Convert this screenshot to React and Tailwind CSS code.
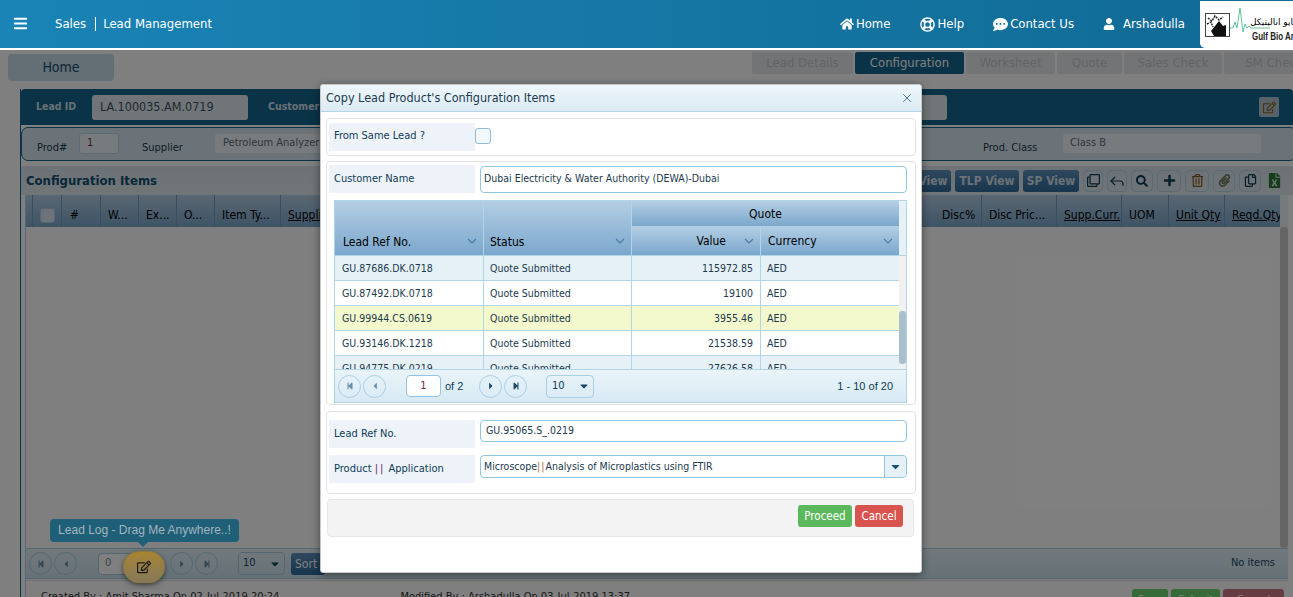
import React from "react";
import { FaHome, FaRegLifeRing, FaCommentDots, FaUser, FaBars, FaRegEdit, FaSearch, FaPlus, FaRegTrashAlt, FaPaperclip, FaRegCopy, FaFileExcel, FaStepBackward, FaStepForward, FaCaretLeft, FaCaretRight, FaCaretDown, FaRegClone } from "react-icons/fa";
import { Reply, X } from "lucide-react";

const font = { fontFamily: '"DejaVu Sans Condensed", "DejaVu Sans", Tahoma, sans-serif' };
const arial = { fontFamily: '"Liberation Sans", sans-serif' };

function Caret() {
  return (
    <svg width="10" height="6" viewBox="0 0 10 6" className="shrink-0 text-[#4d7a9c]">
      <path d="M1 1l4 4 4-4" fill="none" stroke="currentColor" strokeWidth="1.1" />
    </svg>
  );
}

function NavItem({ icon, label }) {
  return (
    <div className="flex items-center gap-[2px] text-white text-[13px]">
      {icon}
      <span>{label}</span>
    </div>
  );
}

function PageBtn({ children, dark }) {
  return (
    <div className={`w-[23px] h-[23px] rounded-full border flex items-center justify-center text-[10px] ${dark ? "border-[#a9cfe3] text-[#1b4a68]" : "border-[#a9cfe3] text-[#6d90a8]"}`}>
      {children}
    </div>
  );
}

function Tab({ label, active, w }) {
  return (
    <div className={`h-[22px] rounded-[2px] flex items-center justify-center text-[13px] ${w} ${active ? "bg-[#14668e] text-white" : "bg-[#e6e9ec] text-[#c5cacd]"}`}>
      {label}
    </div>
  );
}

function ToolBtn({ children, w = "w-[20px]" }) {
  return (
    <div className={`h-[22px] ${w} rounded-[5px] border border-[#b5d6e8] flex items-center justify-center text-[#0f3d57] text-[13px]`}>
      {children}
    </div>
  );
}

function ViewBtn({ children, w }) {
  return (
    <div className={`h-[22px] ${w} rounded-[3px] bg-gradient-to-b from-[#5d90bc] to-[#2f6b9c] text-[#d5e3ee] font-bold text-[12px] flex items-center justify-center`}>
      {children}
    </div>
  );
}

function HeadCell({ w, children, underline, pl = "pl-[7px]" }) {
  return (
    <div className={`${w} shrink-0 h-full border-r border-[#6d9cc0] flex items-center pt-[8px] overflow-hidden whitespace-nowrap text-[12px] text-black ${pl} ${underline ? "underline" : ""}`}>
      {children}
    </div>
  );
}

const rows = [
  ["GU.87686.DK.0718", "115972.85", "bg-[#e6f1f7]"],
  ["GU.87492.DK.0718", "19100", "bg-white"],
  ["GU.99944.CS.0619", "3955.46", "bg-[#f4f9cd]"],
  ["GU.93146.DK.1218", "21538.59", "bg-white"],
  ["GU.94775.DK.0219", "27626.58", "bg-[#e6f1f7]"],
];

const headBg = "bg-gradient-to-b from-[#b4cfe4] to-[#7ba7cc]";

function Modal() {
  return (
    <div className="absolute left-[320px] top-[84px] z-30 w-[602px] h-[489px] bg-white rounded-[3px] border border-[#c8c8c8] shadow-[0_2px_8px_rgba(0,0,0,0.45)] flex flex-col text-[11px] text-[#0f3d57]">
      <div className="h-[27px] shrink-0 bg-gradient-to-b from-[#eef6fb] to-[#dcebf5] border-b border-[#b4d4e8] rounded-t-[3px] flex items-center justify-between pl-[5px] pr-[7px]">
        <span className="text-[12.5px] text-[#1c3a4e]">Copy Lead Product's Configuration Items</span>
        <X size={14} strokeWidth={1.6} className="text-[#3f7392]" />
      </div>

      <div className="mt-[6px] mx-[5px] h-[38px] border border-[#e2e2e2] rounded-[4px] flex items-center pl-[2px] shrink-0">
        <div className="w-[146px] h-[28px] bg-[#eef2f9] flex items-center pl-[5px] pb-[2px]">From Same Lead ?</div>
        <div className="w-[16px] h-[16px] rounded-[3px] border border-[#8dbcd9] bg-[#f2f8fc] -mt-[3px]" />
      </div>

      <div className="mt-[5px] mx-[5px] h-[244px] border border-[#e2e2e2] rounded-[4px] pl-[2px] pt-[3px] shrink-0">
        <div className="flex items-center">
          <div className="w-[146px] h-[28px] bg-[#eef2f9] flex items-center pl-[5px]">Customer Name</div>
          <div className="ml-[5px] w-[427px] h-[27px] border border-[#93c5e0] rounded-[4px] flex items-center pl-[3px] text-[#1c3a4e] text-[10.5px]">Dubai Electricity &amp; Water Authority (DEWA)-Dubai</div>
        </div>
        <div className="mt-[7px] ml-[5px] w-[573px] h-[203px] border border-[#b0d5e8] flex flex-col overflow-hidden">
          <div className="h-[55px] shrink-0 flex border-b border-[#b0d5e8]">
            <div className={`w-[149px] shrink-0 ${headBg} border-r border-[#b0d5e8] flex items-end justify-between pl-[8px] pr-[6px] pb-[4px] text-[12px] text-black`}>
              <span>Lead Ref No.</span><span className="pb-[7px]"><Caret /></span>
            </div>
            <div className={`w-[148px] shrink-0 ${headBg} border-r border-[#b0d5e8] flex items-end justify-between pl-[6px] pr-[6px] pb-[4px] text-[12px] text-black`}>
              <span>Status</span><span className="pb-[7px]"><Caret /></span>
            </div>
            <div className="w-[267px] shrink-0 flex flex-col">
              <div className={`h-[25px] ${headBg} flex items-center justify-center text-[12px] text-black`}>Quote</div>
              <div className="flex-1 flex">
                <div className={`w-[129px] ${headBg} border-r border-[#b0d5e8] flex items-center justify-end gap-[18px] pr-[6px] text-[12px] text-black`}>
                  <span>Value</span><Caret />
                </div>
                <div className={`flex-1 ${headBg} flex items-center justify-between pl-[7px] pr-[6px] text-[12px] text-black`}>
                  <span>Currency</span><Caret />
                </div>
              </div>
            </div>
            <div className="flex-1 bg-[#e6f1f7]" />
          </div>
          <div className="h-[114px] shrink-0 flex overflow-hidden border-b border-[#b0d5e8]">
            <div className="w-[564px] shrink-0">
              {rows.map((r) => (
                <div key={r[0]} className={`h-[25px] flex items-center border-b border-[#b0d5e8] text-[#1c3a4e] text-[10.5px] ${r[2]}`}>
                  <div className="w-[149px] shrink-0 h-full border-r border-[#b0d5e8] flex items-center pl-[7px] pt-[1px]">{r[0]}</div>
                  <div className="w-[148px] shrink-0 h-full border-r border-[#b0d5e8] flex items-center pl-[6px] pt-[1px]">Quote Submitted</div>
                  <div className="w-[129px] shrink-0 h-full border-r border-[#b0d5e8] flex items-center justify-end pr-[7px] pt-[1px]">{r[1]}</div>
                  <div className="flex-1 h-full flex items-center pl-[6px] pt-[1px]">AED</div>
                </div>
              ))}
            </div>
            <div className="flex-1 bg-[#f1f1f1] relative">
              <div className="absolute left-0 right-0 top-[55px] h-[53px] rounded-[3px] bg-[#a9bfcc]" />
            </div>
          </div>
          <div className="flex-1 bg-gradient-to-b from-[#eaf4f9] to-[#d8e9f4] flex items-center pl-[3px] pr-[13px]">
            <div className="flex gap-[2px]">
              <PageBtn><FaStepBackward className="text-[8px]" /></PageBtn>
              <PageBtn><FaCaretLeft /></PageBtn>
            </div>
            <div className="ml-[20px] w-[35px] h-[22px] bg-white border border-[#93c5e0] rounded-[4px] flex items-center justify-center text-[#6b2a50]">1</div>
            <span className="w-[38px] pl-[4px]" style={arial}>of 2</span>
            <div className="flex gap-[2px]">
              <PageBtn dark><FaCaretRight /></PageBtn>
              <PageBtn dark><FaStepForward className="text-[8px]" /></PageBtn>
            </div>
            <div className="ml-[19px] w-[48px] h-[23px] border border-[#a9cfe3] rounded-[4px] flex items-center justify-between pl-[5px] pr-[3px]">
              <span>10</span><FaCaretDown className="text-[#14445f] text-[12px]" />
            </div>
            <span className="ml-auto" style={arial}>1 - 10 of 20</span>
          </div>
        </div>
      </div>

      <div className="mt-[6px] mx-[5px] h-[83px] border border-[#e2e2e2] rounded-[4px] pl-[2px] pt-[8px] shrink-0 flex flex-col gap-[7px]">
        <div className="flex items-start">
          <div className="w-[146px] h-[28px] bg-[#eef2f9] flex items-center pl-[5px]">Lead Ref No.</div>
          <div className="ml-[5px] w-[427px] h-[22px] border border-[#93c5e0] rounded-[4px] flex items-center pl-[5px] text-[#1c3a4e] text-[10.5px]">GU.95065.S_.0219</div>
        </div>
        <div className="flex items-start">
          <div className="w-[146px] h-[28px] bg-[#eef2f9] flex items-center pl-[5px] whitespace-pre">
            Product <span className="tracking-[2px] text-[#6b2a70]">||</span> Application
          </div>
          <div className="ml-[5px] w-[427px] h-[23px] border border-[#93c5e0] rounded-[4px] flex items-center pl-[3px] text-[#1c3a4e] text-[10.5px]">
            <span className="flex-1">Microscope<span className="tracking-[1px] text-[#a0703a]">||</span>Analysis of Microplastics using FTIR</span>
            <div className="w-[22px] h-full border-l border-[#93c5e0] bg-[#e6f1f7] flex items-center justify-center rounded-r-[4px]">
              <FaCaretDown className="text-[#14506f] text-[13px]" />
            </div>
          </div>
        </div>
      </div>

      <div className="mt-[5px] ml-[6px] w-[587px] h-[38px] bg-[#f3f3f3] border border-[#e8e8e8] rounded-[4px] flex items-start justify-end pt-[5px] pr-[10px] gap-[3px] shrink-0">
        <div className="w-[54px] h-[22px] rounded-[3px] bg-[#5cb85c] text-white text-[11.5px] flex items-center justify-center pt-[2px]">Proceed</div>
        <div className="w-[48px] h-[22px] rounded-[3px] bg-[#d9534f] text-white text-[11.5px] flex items-center justify-center pt-[2px]">Cancel</div>
      </div>
    </div>
  );
}

function Logo() {
  return (
    <div className="w-[93px] h-[47px] bg-white rounded-bl-[5px] overflow-hidden relative shrink-0">
      <svg width="26" height="25" viewBox="0 0 26 25" className="absolute left-[5px] top-[12px]">
        <rect x="0.5" y="0.5" width="24" height="23" fill="#fff" stroke="#444" />
        <path d="M6 18L14 8l4 5 3-1v11H9z" fill="#111" />
        <path d="M3 5l4 3 3-5 4 4 4-3M2 11l4-2 2 5" fill="none" stroke="#222" strokeWidth="1.5" strokeDasharray="2 1" />
      </svg>
      <svg width="40" height="30" viewBox="0 0 40 30" className="absolute left-[30px] top-[3px]">
        <path d="M0 24h3l2-6 2 6 3-20 3 24 2-8 2 4 2-2 2 2h20" fill="none" stroke="#3fb37f" strokeWidth="0.8" />
      </svg>
      <span className="absolute left-[50px] top-[16px] text-[9px] tracking-[1px] leading-[10px] whitespace-nowrap text-black" dir="rtl" style={{ fontFamily: '"DejaVu Sans", sans-serif' }}>بايو اناليتيكل</span>
      <span className="absolute left-[52px] top-[30px] text-[10px] font-bold leading-[11px] whitespace-nowrap text-[#222] scale-x-[0.8] origin-left" style={arial}>Gulf Bio Analytical</span>
    </div>
  );
}

export default function App() {
  return (
    <div className="relative w-[1293px] h-[597px] overflow-hidden bg-white text-[11px]" style={font}>
      <header className="relative z-20 h-[50px] border-b-2 border-white bg-gradient-to-r from-[#1a84b6] to-[#106a94] flex items-center">
        <FaBars className="ml-[13px] text-white text-[15px] -mt-[2px]" />
        <div className="ml-[27px] flex items-center text-white text-[13px]">
          <span>Sales</span>
          <span className="ml-[9px] mr-[7px] h-[14px] w-px bg-white" />
          <span>Lead Management</span>
        </div>
        <div className="ml-auto flex items-center">
          <NavItem icon={<FaHome className="text-[14px]" />} label="Home" />
          <div className="w-[30px]" />
          <NavItem icon={<FaRegLifeRing className="text-[15px]" />} label="Help" />
          <div className="w-[29px]" />
          <NavItem icon={<FaCommentDots className="text-[15px]" />} label="Contact Us" />
          <div className="w-[29px]" />
          <NavItem icon={<FaUser className="text-[12px] mr-[6px]" />} label="Arshadulla" />
          <div className="w-[15px]" />
          <Logo />
        </div>
      </header>

      <main className="h-[547px] overflow-hidden">
        <div className="flex items-start h-[39px] pt-[4px] overflow-hidden">
          <div className="ml-[8px] w-[106px] h-[27px] shrink-0 rounded-[4px] bg-[#c9dcea] text-[#14506f] text-[14px] flex items-center justify-center">Home</div>
          <div className="ml-[638px] flex gap-[2px] -mt-[2px] shrink-0">
            <Tab label="Lead Details" w="w-[101px]" />
            <Tab label="Configuration" active w="w-[109px]" />
            <Tab label="Worksheet" w="w-[89px]" />
            <Tab label="Quote" w="w-[65px]" />
            <Tab label="Sales Check" w="w-[98px]" />
            <Tab label="SM Check" w="w-[100px]" />
          </div>
        </div>

        <div className="ml-[20px] h-[530px] flex flex-col border-l border-[#14668e]">
          <div className="h-[36px] shrink-0 bg-[#14668e] rounded-t-[4px] flex items-center">
            <span className="ml-[15px] w-[37px] whitespace-nowrap text-[#cfe0ea] text-[10.5px] font-bold">Lead ID</span>
            <div className="ml-[19px] w-[156px] h-[25px] shrink-0 rounded-[3px] bg-[#e3eaef] text-[#3b5566] text-[12.5px] flex items-center pl-[8px]">LA.100035.AM.0719</div>
            <span className="ml-[20px] w-[48px] whitespace-nowrap text-[#cfe0ea] text-[10.5px] font-bold">Customer</span>
            <div className="ml-[501px] w-[130px] h-[25px] shrink-0 rounded-[3px] bg-[#e3eaef]" />
            <div className="ml-auto w-[20px] h-[20px] mr-[14px] rounded-[2px] bg-[#b0c4d0] flex items-center justify-center text-[#8a6a1e] text-[13px]"><FaRegEdit /></div>
          </div>
          <div className="mt-[2px] h-[34px] shrink-0 -mr-[4px] border border-[#14668e] rounded-[7px] bg-[#d8e6f0] flex items-center text-[11px] text-[#1c3a4e]">
            <span className="ml-[15px] mt-[8px] w-[28px]">Prod#</span>
            <div className="ml-[14px] w-[40px] h-[21px] rounded-[3px] border border-[#b5d6e8] bg-[#f0f6fa] text-[#7a2a4f] flex items-center pl-[7px] -mt-[1px]">1</div>
            <span className="ml-[23px] mt-[8px] w-[40px]">Supplier</span>
            <div className="ml-[32px] w-[300px] h-[21px] rounded-[3px] border border-[#dde7ee] bg-[#f0f6fa] text-[#5a6f7c] flex items-center pl-[8px] -mt-[1px]">Petroleum Analyzer Company</div>
            <span className="ml-[469px] mt-[8px] w-[55px] whitespace-nowrap">Prod. Class</span>
            <div className="ml-[24px] w-[200px] h-[21px] shrink-0 rounded-[3px] border border-[#dde7ee] bg-[#f0f6fa] text-[#5a6f7c] flex items-center pl-[7px] -mt-[1px]">Class B</div>
          </div>
          <div className="mt-[5px] h-[29px] shrink-0 bg-gradient-to-b from-[#d8e4ec] to-[#e0eaf0] flex items-center pl-[5px] pr-[10px]">
            <span className="text-[#14506f] font-bold text-[13px]">Configuration Items</span>
            <div className="ml-auto flex items-center gap-[4px]">
              <ViewBtn w="w-[36px]">View</ViewBtn>
              <ViewBtn w="w-[64px]">TLP View</ViewBtn>
              <ViewBtn w="w-[56px]">SP View</ViewBtn>
              <ToolBtn><FaRegClone /></ToolBtn>
              <ToolBtn><Reply size={18} strokeWidth={1.6} /></ToolBtn>
              <ToolBtn w="w-[22px]"><FaSearch className="text-[12px]" /></ToolBtn>
              <ToolBtn w="w-[24px]"><FaPlus /></ToolBtn>
              <ToolBtn w="w-[24px]"><FaRegTrashAlt className="text-[#8a5a20]" /></ToolBtn>
              <ToolBtn w="w-[22px]"><FaPaperclip className="text-[#6b7f5a]" /></ToolBtn>
              <ToolBtn w="w-[22px]"><FaRegCopy /></ToolBtn>
              <div className="w-[18px] h-[22px] flex items-center justify-center text-[15px]"><FaFileExcel className="text-[#2a7a35]" /></div>
            </div>
          </div>
          <div className="ml-[4px] mr-[5px] flex-1 flex flex-col border-l border-[#b0d5e8]">
            <div className={`h-[32px] shrink-0 ${headBg} flex items-center`}>
              <div className="w-[7px] shrink-0 h-full border-r border-[#6d9cc0]" />
              <div className="w-[29px] shrink-0 h-full border-r border-[#6d9cc0] flex items-center pl-[7px] pt-[8px]"><div className="w-[15px] h-[15px] rounded-[3px] bg-[#d9e8f3] border border-[#a9cfe3]" /></div>
              <HeadCell w="w-[39px]" pl="pl-[8px]">#</HeadCell>
              <HeadCell w="w-[38px]">W...</HeadCell>
              <HeadCell w="w-[38px]">Ex...</HeadCell>
              <HeadCell w="w-[38px]">O...</HeadCell>
              <HeadCell w="w-[66px]">Item Ty...</HeadCell>
              <HeadCell w="w-[60px]" underline>Supplier</HeadCell>
              <div className="flex-1" />
              <HeadCell w="w-[47px]">Disc%</HeadCell>
              <HeadCell w="w-[75px]">Disc Pric...</HeadCell>
              <HeadCell w="w-[65px]" underline>Supp.Curr.</HeadCell>
              <HeadCell w="w-[47px]">UOM</HeadCell>
              <HeadCell w="w-[56px]" underline>Unit Qty</HeadCell>
              <div className="w-[55px] pl-[7px] pt-[8px] overflow-hidden whitespace-nowrap text-[12px] underline text-black">Reqd.Qty</div>
              <div className="w-[8px] h-full bg-[#eef4f8]" />
            </div>
            <div className="h-[321px] shrink-0 bg-white flex justify-end">
              <div className="w-[8px] h-full bg-[#f1f1f1]"><div className="h-full rounded bg-[#c8c8c8]" /></div>
            </div>
            <div className="h-[31px] shrink-0 bg-gradient-to-b from-[#e3f2fa] to-[#cce2ee] border-y border-[#a9cfe3] flex items-center pl-[3px] pr-[13px] relative">
              <div className="flex gap-[2px]">
                <PageBtn><FaStepBackward className="text-[8px]" /></PageBtn>
                <PageBtn><FaCaretLeft /></PageBtn>
              </div>
              <div className="ml-[21px] w-[35px] h-[22px] bg-white border border-[#a9cfe3] rounded-[4px] flex items-center pl-[6px] text-[#6d90a8]">0</div>
              <div className="ml-[37px] flex gap-[2px]">
                <PageBtn><FaCaretRight /></PageBtn>
                <PageBtn><FaStepForward className="text-[8px]" /></PageBtn>
              </div>
              <div className="ml-[20px] w-[47px] h-[23px] border border-[#a9cfe3] rounded-[4px] flex items-center justify-between pl-[4px] pr-[3px] text-[#1b4a68]">
                <span>10</span><FaCaretDown className="text-[#14445f] text-[12px]" />
              </div>
              <div className="ml-[6px] w-[34px] h-[22px] rounded-[3px] bg-gradient-to-b from-[#5d90bc] to-[#2f6b9c] text-white text-[12px] flex items-center pl-[4px]">Sort</div>
              <span className="ml-auto text-[#1b4a68]">No items</span>
            </div>
            <div className="mt-[1px] flex-1 bg-white border-t border-[#dddddd] flex items-start pl-[15px] pt-[8px] relative text-[#333]">
              <span>Created By : Amit Sharma On 02-Jul-2019 20:24</span>
              <span className="ml-[121px]">Modified By : Arshadulla On 03-Jul-2019 13:37</span>
              <div className="ml-auto flex gap-[3px] mr-[4px]">
                <div className="w-[36px] h-[22px] rounded-[3px] bg-[#6cd672] text-white flex items-center justify-center">Save</div>
                <div className="w-[49px] h-[22px] rounded-[3px] bg-[#6cd672] text-white flex items-center justify-center">Submit</div>
                <div className="w-[61px] h-[22px] rounded-[3px] bg-[#c87882] text-white flex items-center justify-center">Cancel</div>
              </div>
            </div>
          </div>
        </div>
      </main>

      <div className="absolute inset-0 z-10 bg-black/50" />

      <div className="absolute z-[12] left-[50px] top-[519px] w-[189px] h-[23px] rounded-[4px] bg-[#1f6078] text-[#a2b4be] text-[12px] flex items-center justify-center pb-[1px]" style={arial}>
        Lead Log - Drag Me Anywhere..!
        <div className="absolute left-[88px] top-[23px] w-0 h-0 border-x-[5px] border-x-transparent border-t-[5px] border-t-[#1f6078]" />
      </div>
      <div className="absolute z-[12] left-[123px] top-[551px] w-[42px] h-[32px] rounded-full bg-gradient-to-b from-[#a8842f] to-[#85785a] border border-[#8f7a35] shadow-[0_2px_5px_rgba(0,0,0,0.5)] flex items-center justify-center text-[#1a1a1a] text-[14px]">
        <FaRegEdit />
      </div>

      <Modal />
    </div>
  );
}
